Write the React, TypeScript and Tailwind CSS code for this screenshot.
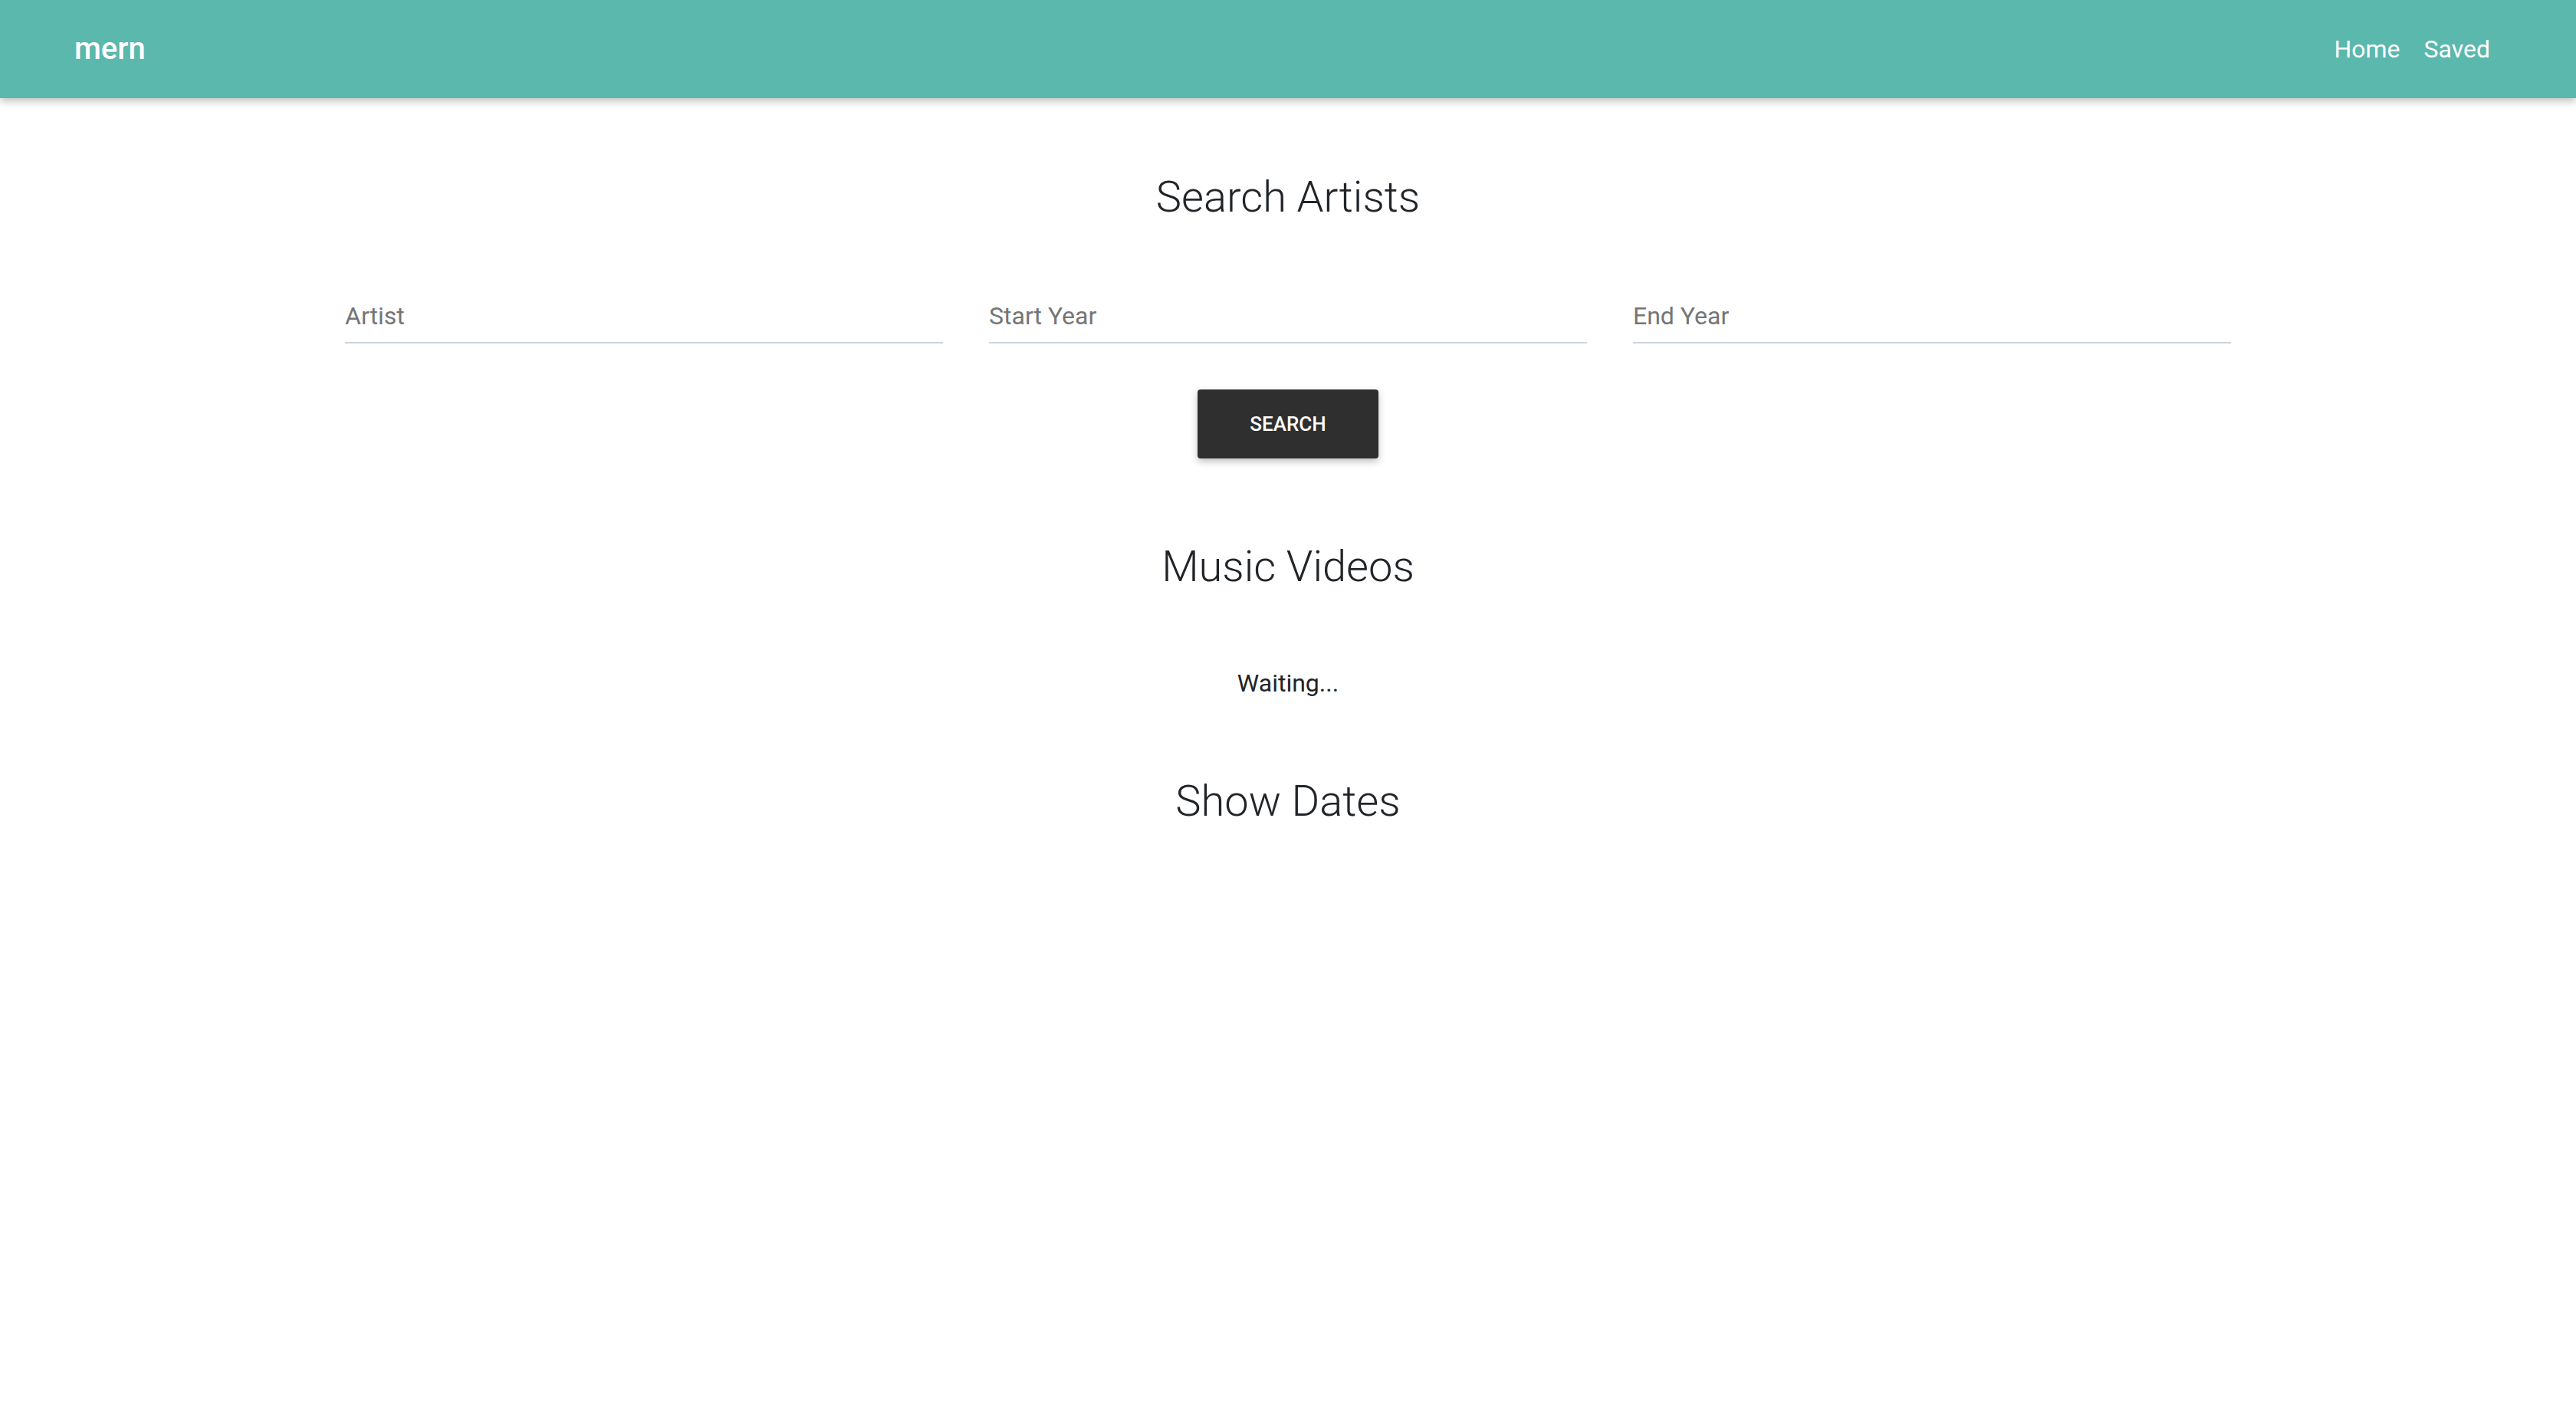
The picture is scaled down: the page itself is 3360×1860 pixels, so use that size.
import React from 'react';

const SearchField: React.FC<{ label: string }> = ({ label }) => (
  <div className="border-b-2 border-[#ced4da] pb-[18px]">
    <span className="block text-[32px] leading-none text-[#757575]">{label}</span>
  </div>
);

const App: React.FC = () => {
  return (
    <div className="min-h-[1860px] bg-white font-['Roboto',sans-serif] text-[#212529]">
      {/* Navbar */}
      <nav className="flex h-[128px] items-center justify-between bg-[#5bb8ad] pl-[97px] pr-[112px] shadow-[0_4px_10px_rgba(0,0,0,0.25)]">
        <a className="text-[40px] font-medium leading-none text-white">mern</a>
        <ul className="flex items-center gap-[31px] text-[32px] leading-none text-white">
          <li>Home</li>
          <li>Saved</li>
        </ul>
      </nav>

      <main className="flex flex-col items-center">
        <h4 className="mt-[101px] text-[56px] font-light leading-none">Search Artists</h4>

        {/* Formulario */}
        <div className="mt-[111px] grid w-[2460px] grid-cols-3 gap-[60px]">
          <SearchField label="Artist" />
          <SearchField label="Start Year" />
          <SearchField label="End Year" />
        </div>

        <button className="mt-[60px] flex h-[90px] w-[236px] items-center justify-center rounded-[4px] bg-[#2f2f2f] text-[26px] font-medium uppercase leading-none text-white shadow-[0_4px_10px_rgba(0,0,0,0.25)]">
          Search
        </button>

        <h4 className="mt-[113px] text-[56px] font-light leading-none">Music Videos</h4>
        <p className="mt-[108px] text-[32px] leading-none">Waiting...</p>

        <h4 className="mt-[110px] text-[56px] font-light leading-none">Show Dates</h4>
      </main>
    </div>
  );
};

export default App;
